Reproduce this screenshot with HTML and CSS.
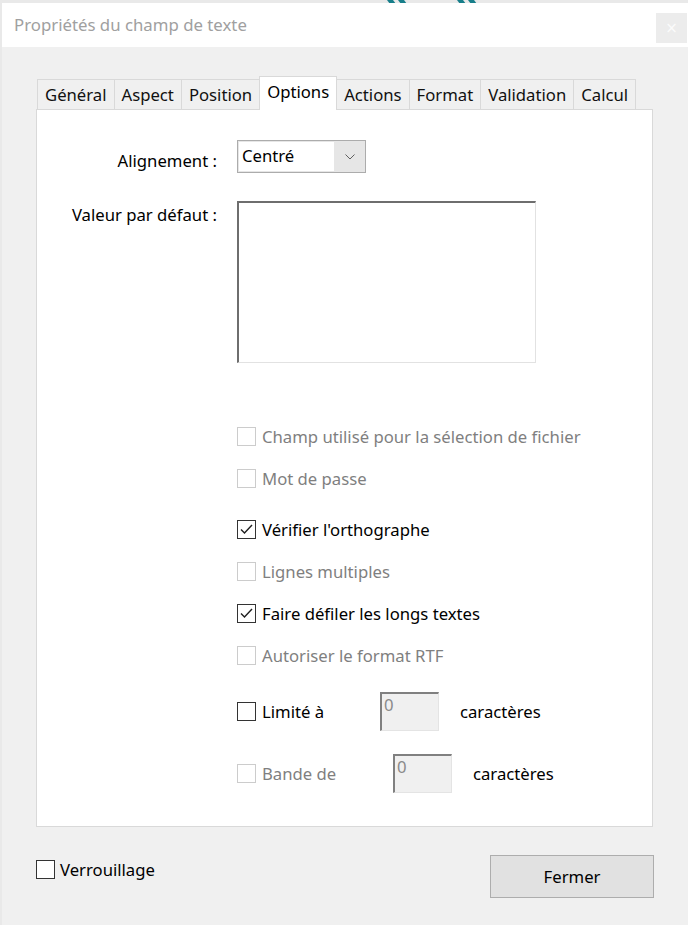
FILE: index.html
```html
<!DOCTYPE html>
<html lang="fr">
<head>
<meta charset="utf-8">
<title>Propriétés du champ de texte</title>
<link rel="stylesheet" href="styles.css">
</head>
<body>
<svg class="peek-logo" width="110" height="4" viewBox="0 0 110 4" aria-hidden="true">
  <g fill="#177e8a">
    <polygon points="7,0 13,0 16,4 10,4"/>
    <polygon points="18,0 24,0 27,4 21,4"/>
    <polygon points="77,0 83,0 86,4 80,4"/>
    <polygon points="88,0 94,0 97,4 91,4"/>
  </g>
</svg>
<div class="window">
  <header class="titlebar">
    <h1 class="title">Propriétés du champ de texte</h1>
    <button class="close" type="button" aria-label="Fermer">×</button>
  </header>
  <div class="dialog">
    <nav class="tabs">
      <span class="tab">Général</span>
      <span class="tab">Aspect</span>
      <span class="tab">Position</span>
      <span class="tab active">Options</span>
      <span class="tab">Actions</span>
      <span class="tab">Format</span>
      <span class="tab">Validation</span>
      <span class="tab">Calcul</span>
    </nav>
    <section class="panel">
      <div class="form-row row-align">
        <span class="field-label">Alignement :</span>
        <div class="select">
          <span class="select-value">Centré</span>
          <span class="select-arrow">
            <svg width="10" height="6" viewBox="0 0 10 6"><polyline points="0.5,0.5 5,5 9.5,0.5" fill="none" stroke="#606060" stroke-width="1"/></svg>
          </span>
        </div>
      </div>
      <div class="form-row row-default">
        <span class="field-label label-top">Valeur par défaut :</span>
        <div class="textarea"></div>
      </div>

      <div class="checks">
        <div class="group">
          <div class="check disabled"><span class="box"></span><span class="check-text">Champ utilisé pour la sélection de fichier</span></div>
          <div class="check disabled"><span class="box"></span><span class="check-text">Mot de passe</span></div>
        </div>
        <div class="group group-2">
          <div class="check"><span class="box checked"><svg width="17" height="17" viewBox="0 0 17 17"><polyline points="3,8.5 6.5,12 14,4" fill="none" stroke="#1e1e1e" stroke-width="1.4"/></svg></span><span class="check-text">Vérifier l'orthographe</span></div>
          <div class="check disabled"><span class="box"></span><span class="check-text">Lignes multiples</span></div>
          <div class="check"><span class="box checked"><svg width="17" height="17" viewBox="0 0 17 17"><polyline points="3,8.5 6.5,12 14,4" fill="none" stroke="#1e1e1e" stroke-width="1.4"/></svg></span><span class="check-text">Faire défiler les longs textes</span></div>
          <div class="check disabled"><span class="box"></span><span class="check-text">Autoriser le format RTF</span></div>
        </div>
        <div class="limit-row limit-first">
          <div class="check"><span class="box"></span><span class="check-text w-limit">Limité à</span></div>
          <span class="num-input">0</span>
          <span class="suffix">caractères</span>
        </div>
        <div class="limit-row limit-second">
          <div class="check disabled"><span class="box"></span><span class="check-text w-band">Bande de</span></div>
          <span class="num-input">0</span>
          <span class="suffix">caractères</span>
        </div>
      </div>
    </section>
    <footer class="footer">
      <div class="check lock"><span class="box"></span><span class="check-text">Verrouillage</span></div>
      <button class="btn" type="button">Fermer</button>
    </footer>
  </div>
</div>
</body>
</html>
```

FILE: styles.css
```css
html, body {
  margin: 0;
  height: 100%;
}

body {
  position: relative;
  box-sizing: border-box;
  padding: 3px 0 0 2px;
  background: #e9e9e9;
  font-family: "Noto Sans", "Open Sans", sans-serif;
  font-size: 16.7px;
  color: #000;
  overflow: hidden;
}

.peek-logo {
  position: absolute;
  top: 0;
  left: 380px;
}

.window {
  position: relative;
  height: 922px;
  background: #f0f0f0;
  display: flex;
  flex-direction: column;
}

.titlebar {
  height: 44px;
  background: #fff;
  display: flex;
  justify-content: space-between;
  align-items: flex-start;
  padding-left: 12px;
}

.title {
  margin: 11px 0 0;
  font-size: 16.8px;
  font-weight: 400;
  line-height: 22px;
  color: #a0a0a0;
}

.close {
  margin: 10px 1px 0 0;
  width: 31px;
  height: 30px;
  border: 0;
  padding: 0;
  background: #ececec;
  color: #fbfbfb;
  font-size: 15px;
  line-height: 30px;
  font-family: "DejaVu Sans", sans-serif;
}

.dialog {
  flex: 1;
  padding: 29px 33px 0 34px;
  display: flex;
  flex-direction: column;
}

.tabs {
  display: flex;
  align-items: flex-end;
  padding-left: 1px;
  position: relative;
  z-index: 1;
}

.tab {
  height: 29px;
  line-height: 29px;
  padding: 0 7px;
  border: 1px solid #d9d9d9;
  border-bottom: 0;
  margin-left: -1px;
  background: #f0f0f0;
  color: #111;
  white-space: nowrap;
}

.tab:first-child {
  margin-left: 0;
}

.tab.active {
  height: 33px;
  line-height: 30px;
  padding: 0 7px;
  background: #fff;
  margin-bottom: -1px;
  color: #000;
}

.panel {
  box-sizing: border-box;
  width: 617px;
  height: 718px;
  background: #fff;
  border: 1px solid #d9d9d9;
  padding-top: 30px;
}

.form-row {
  display: flex;
  gap: 20px;
}

.row-default {
  margin-top: 28px;
}

.field-label {
  width: 180px;
  text-align: right;
  line-height: 22px;
  padding-top: 10px;
}

.field-label.label-top {
  padding-top: 3px;
}

.select {
  box-sizing: border-box;
  width: 129px;
  height: 33px;
  display: flex;
  border: 1px solid #acacac;
  background: #e6e6e6;
}

.select-value {
  flex: 1;
  background: #fff;
  margin: 1px 0 1px 1px;
  padding-left: 3px;
  line-height: 28px;
}

.select-arrow {
  width: 31px;
  display: flex;
  align-items: center;
  justify-content: center;
}

.textarea {
  box-sizing: border-box;
  width: 299px;
  height: 162px;
  background: #fff;
  border-top: 2px solid #6e6e6e;
  border-left: 2px solid #6e6e6e;
  border-right: 1px solid #e2e2e2;
  border-bottom: 1px solid #e2e2e2;
}

.checks {
  margin-top: 52px;
  padding-left: 200px;
}

.group-2 {
  margin-top: 9px;
}

.check {
  display: flex;
  align-items: center;
  gap: 6px;
  height: 42px;
}

.box {
  box-sizing: border-box;
  width: 19px;
  height: 19px;
  border: 1px solid #333;
  background: #fff;
  display: flex;
  align-items: center;
  justify-content: center;
  flex: none;
}

.check.disabled .box {
  border-color: #cccccc;
}

.check.disabled .check-text {
  color: #7f7f7f;
}

.limit-row {
  display: flex;
  align-items: center;
}

.limit-first {
  margin-top: 14px;
}

.limit-second {
  margin-top: 20px;
}

.w-limit {
  width: 118px;
}

.w-band {
  width: 131px;
}

.num-input {
  box-sizing: border-box;
  width: 59px;
  height: 39px;
  background: #f0f0f0;
  border-top: 2px solid #808080;
  border-left: 2px solid #808080;
  border-right: 1px solid #e4e4e4;
  border-bottom: 1px solid #e4e4e4;
  color: #8a8a8a;
  padding-left: 2px;
  line-height: 22px;
}

.suffix {
  margin-left: 21px;
}

.footer {
  margin-top: 28px;
  display: flex;
  justify-content: space-between;
  align-items: flex-start;
  width: 618px;
}

.check.lock {
  height: 20px;
  margin-top: 4px;
  gap: 5px;
}

.btn {
  box-sizing: border-box;
  width: 164px;
  height: 43px;
  border: 1px solid #adadad;
  background: #e1e1e1;
  font-family: inherit;
  font-size: 16.7px;
  color: #000;
  padding: 0;
}
```
